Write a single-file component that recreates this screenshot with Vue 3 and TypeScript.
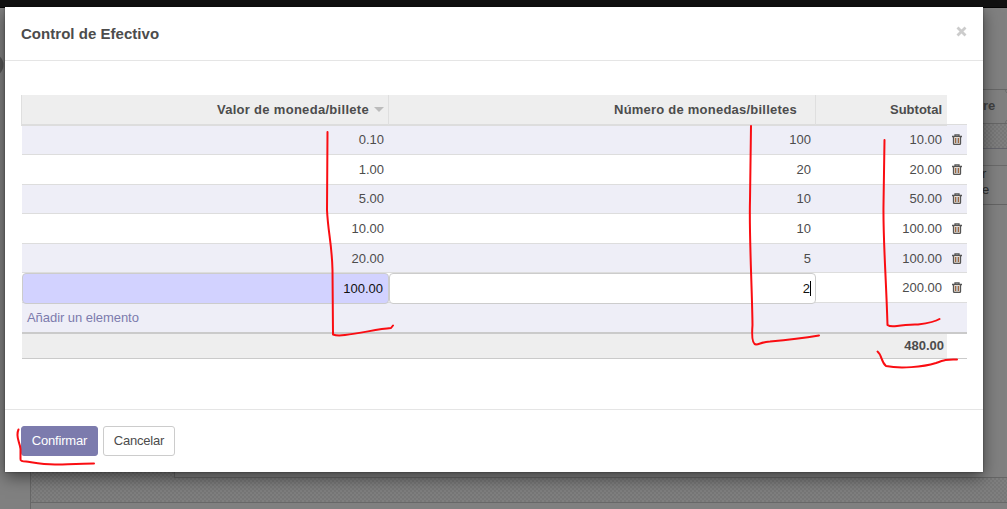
<script setup lang="ts">
interface Row {
  value: string
  count: string
  subtotal: string
  editing?: boolean
}

const rows: Row[] = [
  { value: '0.10', count: '100', subtotal: '10.00' },
  { value: '1.00', count: '20', subtotal: '20.00' },
  { value: '5.00', count: '10', subtotal: '50.00' },
  { value: '10.00', count: '10', subtotal: '100.00' },
  { value: '20.00', count: '5', subtotal: '100.00' },
  { value: '100.00', count: '2', subtotal: '200.00', editing: true },
]

const strokes: string[] = [
  'M327.5 132 L327 210 C328 232 332 245 332.5 270 L333 334.5 Q337 336 345 335 C362 333 378 329 391 328 L393 325.5',
  'M751 126 L750 200 C749 235 752 285 752.5 325 Q751 344 756 344.5 C760 344 762 342 770 341.5 C787 340 804 338 819 335.5',
  'M884.5 140 L883.500 205 C883 240 886 275 887.500 325 Q890 327 897 326 C908 325 910 324 918 324.500 C929 323 935 322 939.500 319',
  'M877.5 351.5 C882 355 881 362 886 366 C900 369 923 367 936 363 C946 359 947 359.500 957 359.500',
  'M18.500 429.500 C15 437 20 442 20.500 449 L20.500 459 Q20 461.500 26 461.500 C36 463 45 465 58 464.500 C73 464 84 463.500 94 463.500',
]
</script>

<template>
  <div class="screen">
    <svg class="backdrop" width="1007" height="509" viewBox="0 0 1007 509" aria-hidden="true">
      <defs>
        <pattern id="checker" width="4" height="4" patternUnits="userSpaceOnUse">
          <rect width="4" height="4" fill="#7f7f7f" />
          <rect width="2" height="2" fill="#777" />
          <rect x="2" y="2" width="2" height="2" fill="#777" />
        </pattern>
      </defs>
      <rect width="1007" height="509" fill="#808080" />
      <rect width="1007" height="8" fill="#111" />
      <rect y="7" width="1007" height="1" fill="#050505" />
      <circle cx="-8" cy="65" r="11.500" fill="#565656" />
      <rect x="980" y="89" width="27" height="1" fill="#676767" />
      <path d="M1005.500 90 Q1005.500 92 1007 93 M1005.500 123 Q1005.500 121 1007 120" fill="none" stroke="#6d6d6d" />
      <rect x="980" y="123" width="27" height="25" fill="url(#checker)" />
      <rect x="980" y="123" width="27" height="1" fill="#676767" />
      <rect x="980" y="148" width="27" height="1" fill="#64646b" />
      <rect x="980" y="165" width="27" height="1" fill="#6a6a6a" />
      <rect x="980" y="204" width="27" height="1" fill="#646464" />
      <text x="983" y="110" class="behind bold">re</text>
      <text x="982" y="178" class="behind">r</text>
      <text x="982" y="194" class="behind">e</text>
      <rect x="31" y="465" width="976" height="37" fill="url(#checker)" />
      <rect x="30" y="465" width="1" height="44" fill="#676767" />
      <rect x="174" y="465" width="833" height="13" fill="#666" />
      <rect x="175" y="465" width="832" height="12" fill="#808080" />
      <rect x="31" y="502" width="976" height="1" fill="#686868" />
    </svg>

    <section class="modal">
      <header class="modal-header">
        <h1>Control de Efectivo</h1>
        <svg class="close" width="11" height="11" viewBox="0 0 11 11">
          <path d="M1.500 1.500 L9.500 9.500 M9.500 1.500 L1.500 9.500" stroke="#ccc" stroke-width="2.800" />
        </svg>
      </header>

      <main class="modal-body">
        <div class="line head">
          <div class="cell th first">
            <span>Valor de moneda/billete</span>
            <i class="sort"></i>
          </div>
          <div class="cell th second">Número de monedas/billetes</div>
          <div class="cell th third">Subtotal</div>
          <div class="blank"></div>
        </div>
        <div
          v-for="(row, i) in rows"
          :key="i"
          class="line row"
          :class="{ odd: i % 2 === 0, short: i === 2 || i === 4, initial: i === 0, raised: i === 2 }"
        >
          <div v-if="row.editing" class="field required">{{ row.value }}</div>
          <div v-else class="cell">{{ row.value }}</div>
          <div v-if="row.editing" class="field">{{ row.count }}<i class="caret"></i></div>
          <div v-else class="cell">{{ row.count }}</div>
          <div class="cell">{{ row.subtotal }}</div>
          <div class="trash">
            <svg width="10" height="11" viewBox="0 0 10 11">
              <path d="M0 2.500H10 M3 2.500V.8H7V2.500" fill="none" stroke="#555" stroke-width="1.300" />
              <path d="M1.500 3V9.500Q1.500 10.400 2.400 10.400H7.600Q8.500 10.400 8.500 9.500V3" fill="#e8dccf" stroke="#555" stroke-width="1.300" />
              <path d="M3.500 4V9 M6.500 4V9" stroke="#a0673f" />
              <path d="M5 4V9" stroke="#7f8ea3" />
            </svg>
          </div>
        </div>
        <div class="add"><a>Añadir un elemento</a></div>
        <div class="line total">
          <div class="sum">480.00</div>
          <div class="blank"></div>
        </div>
      </main>

      <footer class="modal-footer">
        <button class="btn primary">Confirmar</button>
        <button class="btn">Cancelar</button>
      </footer>
    </section>

    <svg class="marks" width="1007" height="509" viewBox="0 0 1007 509" aria-hidden="true">
      <path v-for="(d, i) in strokes" :key="i" :d="d" />
    </svg>
  </div>
</template>

<style>
html,
body {
  margin: 0;
  overflow: hidden;
}
</style>

<style scoped>
.screen {
  position: relative;
  width: 1007px;
  height: 509px;
  box-sizing: border-box;
  padding: 7px 0 0 5px;
  overflow: hidden;
  font: 13px/18px "Liberation Sans", Arial, sans-serif;
  color: #4c4c4c;
}
.backdrop,
.marks {
  position: absolute;
  left: 0;
  top: 0;
}
.marks {
  pointer-events: none;
}
.marks path {
  fill: none;
  stroke: #fa0d12;
  stroke-width: 2;
  stroke-linecap: round;
  stroke-linejoin: round;
}
.behind {
  fill: #303030;
  font-size: 13px;
}
.bold {
  font-weight: bold;
  fill: #404040;
}
.modal {
  position: relative;
  display: flex;
  flex-direction: column;
  width: 978px;
  height: 465px;
  background: #fff;
  box-shadow: 0 5px 15px rgba(0, 0, 0, 0.5), 0 0 2px rgba(0, 0, 0, 0.4);
}
.modal-header {
  display: flex;
  justify-content: space-between;
  height: 53px;
  padding: 0 16px;
  border-bottom: 1px solid #e5e5e5;
}
h1 {
  margin: 17px 0 0;
  font-size: 15px;
  line-height: 20px;
  font-weight: bold;
  letter-spacing: 0.03px;
}
.close {
  margin-top: 19px;
}
.modal-body {
  flex: 1;
  padding: 34px 16px 0;
}
.line {
  display: grid;
  grid-template-columns: 368px 427px 131px 20px;
}
.head {
  height: 31px;
}
.cell {
  padding: 6px 5px 0 0;
  text-align: right;
}
.th {
  box-sizing: border-box;
  height: 31px;
  background: #eee;
  border-bottom: 2px solid #ddd;
  border-right: 1px solid #dfdfdf;
  font-weight: bold;
}
.first {
  display: flex;
  justify-content: flex-end;
  gap: 5px;
  padding-right: 4px;
  border-left: 1px solid #dfdfdf;
  letter-spacing: 0.3px;
}
.second {
  padding-right: 18px;
  letter-spacing: 0.23px;
}
.third {
  border-right: 0;
}
.sort {
  width: 0;
  height: 0;
  margin-top: 6px;
  border: 5px solid transparent;
  border-top-color: #bcbcbc;
  border-bottom: 0;
}
.blank {
  background: #fff;
}
.head .blank {
  height: 29px;
  border-bottom: 1px solid #ddd;
  box-shadow: 0 1px #eeeef7;
}
.row {
  box-sizing: border-box;
  height: 30px;
  margin-left: 1px;
  grid-template-columns: 367px 427px 131px 20px;
  border-bottom: 1px solid #ddd;
}
.initial {
  height: 29px;
}
.initial .cell,
.raised .cell {
  padding-top: 5px;
}
.short {
  height: 29px;
}
.odd {
  background: #eeeef7;
}
.trash {
  padding: 9px 0 0 5px;
}
.initial .trash,
.raised .trash {
  padding-top: 8px;
}
.trash svg {
  display: block;
}
.field {
  box-sizing: border-box;
  height: 31px;
  padding: 6px 5px 0 0;
  background: #fff;
  border: 1px solid #ccc;
  border-radius: 4px;
  color: #111;
  text-align: right;
}
.required {
  background: #d2d2ff;
}
.caret {
  display: inline-block;
  width: 1px;
  height: 15px;
  margin-right: -1px;
  background: #000;
  vertical-align: -3px;
}
.add {
  height: 23px;
  margin-left: 1px;
  padding: 6px 5px 0;
  background: #eeeef7;
}
.add a {
  color: #7c7bad;
  letter-spacing: -0.05px;
}
.total {
  height: 24px;
  margin-left: 1px;
  grid-template-columns: 925px 20px;
  border-top: 2px solid #cacaca;
  border-bottom: 1px solid #cacaca;
}
.sum {
  padding: 3px 3px 0 0;
  background: #eee;
  font-weight: bold;
  text-align: right;
}
.modal-footer {
  display: flex;
  align-items: flex-start;
  gap: 5px;
  height: 46px;
  padding: 16px 16px 0;
  border-top: 1px solid #e5e5e5;
}
.btn {
  height: 30px;
  width: 72px;
  padding: 0;
  font: inherit;
  letter-spacing: -0.2px;
  color: #4c4c4c;
  background: #fff;
  border: 1px solid #ccc;
  border-radius: 3px;
}
.primary {
  width: 77px;
  color: #fff;
  background: #7c7bad;
  border-color: #7c7bad;
}
</style>
